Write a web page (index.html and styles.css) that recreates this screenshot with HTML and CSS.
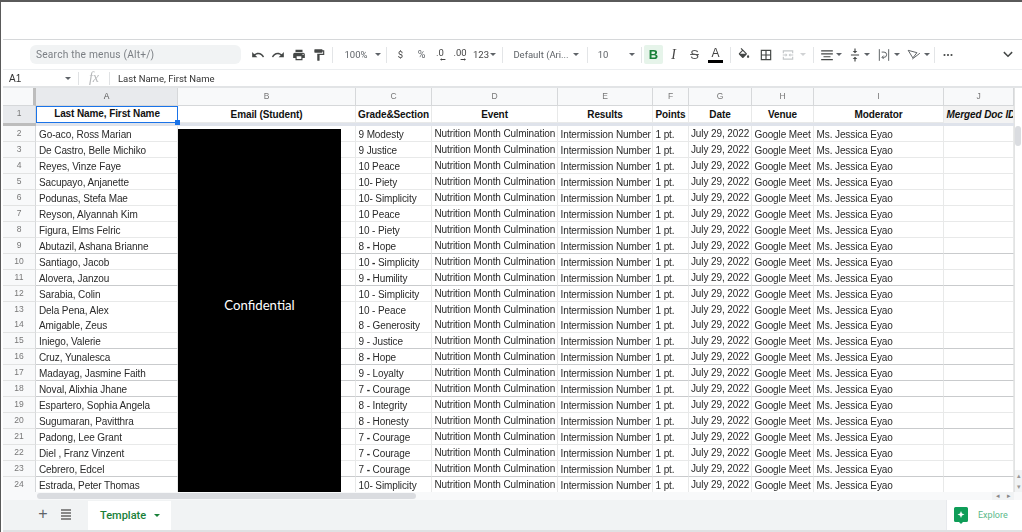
FILE: index.html
```html
<!DOCTYPE html>
<html lang="en">
<head>
<meta charset="utf-8">
<title>Template</title>
<link rel="stylesheet" href="styles.css">
</head>
<body>
<div class="app">
  <div class="blank"></div>
  <div class="toolbar">
    <div class="search">Search the menus (Alt+/)</div>
    <div class="tool w20"><svg class="ic" viewBox="0 0 24 24"><path d="M12.5 8c-2.65 0-5.05.99-6.9 2.6L2 7v9h9l-3.62-3.62c1.39-1.16 3.16-1.88 5.12-1.88 3.54 0 6.55 2.31 7.6 5.5l2.37-.78C21.08 11.03 17.15 8 12.5 8z"/></svg></div>
    <div class="tool w20"><svg class="ic" viewBox="0 0 24 24"><path d="M18.4 10.6C16.55 8.99 14.15 8 11.5 8c-4.65 0-8.58 3.03-9.96 7.22L3.9 16c1.05-3.19 4.05-5.5 7.6-5.5 1.95 0 3.73.72 5.12 1.88L13 16h9V7l-3.6 3.6z"/></svg></div>
    <div class="tool w21"><svg class="ic" viewBox="0 0 24 24"><path d="M19 8H5c-1.66 0-3 1.34-3 3v6h4v4h12v-4h4v-6c0-1.66-1.34-3-3-3zm-3 11H8v-5h8v5zm3-7c-.55 0-1-.45-1-1s.45-1 1-1 1 .45 1 1-.45 1-1 1zm-1-9H6v4h12V3z"/></svg></div>
    <div class="tool w20"><svg class="ic" viewBox="0 0 24 24"><path d="M18 4V3c0-.55-.45-1-1-1H5c-.55 0-1 .45-1 1v4c0 .55.45 1 1 1h12c.55 0 1-.45 1-1V6h1v4H9v11c0 .55.45 1 1 1h2c.55 0 1-.45 1-1v-9h8V4h-3z"/></svg></div>
    <div class="sep s-a"></div>
    <div class="tool w30 txt">100%</div>
    <div class="tool w14"><span class="caret"></span></div>
    <div class="sep s-b"></div>
    <div class="tool w21 txt dark">$</div>
    <div class="tool w21 txt pct">%</div>
    <div class="tool w20 dec dec1"><span>.0</span><svg class="arrow" viewBox="0 0 10 4"><path d="M0 2l3-2v1.300h6v1.400h-6v1.300z"/></svg></div>
    <div class="tool w20 dec dec1"><span>.00</span><svg class="arrow" viewBox="0 0 10 4"><path d="M10 2l-3-2v1.300h-6v1.400h6v1.300z"/></svg></div>
    <div class="tool w18 txt dark">123</div>
    <div class="tool w8 nudge"><span class="caret"></span></div>
    <div class="sep s-c"></div>
    <div class="tool w54 txt">Default (Ari...</div>
    <div class="tool w16"><span class="caret"></span></div>
    <div class="sep s-d"></div>
    <div class="tool w18 txt">10</div>
    <div class="tool w16 far"><span class="caret"></span></div>
    <div class="sep s-e"></div>
    <div class="tool bold">B</div>
    <div class="tool w21 ital">I</div>
    <div class="tool w21 strike">S</div>
    <div class="tool w21 color"><span>A</span><i class="colorbar"></i></div>
    <div class="sep s-f"></div>
    <div class="tool w20"><svg class="ic" viewBox="0 0 24 24"><path d="M16.560 8.940L7.620 0 6.210 1.410l2.380 2.380-5.150 5.150c-.59.59-.59 1.540 0 2.120l5.500 5.500c.29.29.68.44 1.060.44s.77-.15 1.060-.44l5.500-5.500c.59-.58.59-1.530 0-2.120zM5.210 10L10 5.210 14.790 10H5.210zM19 11.500s-2 2.170-2 3.500c0 1.100.9 2 2 2s2-.9 2-2c0-1.330-2-3.500-2-3.500z"/></svg></div>
    <div class="tool w23"><svg class="ic" viewBox="0 0 24 24"><path d="M3 3v18h18V3H3zm8 16H5v-6h6v6zm0-8H5V5h6v6zm8 8h-6v-6h6v6zm0-8h-6V5h6v6z"/></svg></div>
    <div class="tool w21"><svg class="ic faint" viewBox="0 0 24 24"><path d="M3 4h18v5h-2V6H5v3H3zM3 15h2v3h14v-3h2v5H3zM3 11h5V9l3 3-3 3v-2H3zM21 13h-5v2l-3-3 3-3v2h5z"/></svg></div>
    <div class="tool w10"><span class="caret pale"></span></div>
    <div class="sep s-g"></div>
    <div class="tool w16"><svg class="ic" viewBox="0 0 24 24"><path d="M2 4h20v2H2zM2 9h20v2H2zM6 14h12v2H6zM2 19h20v2H2z"/></svg></div>
    <div class="tool w8"><span class="caret"></span></div>
    <div class="tool w16 gapl"><svg class="ic" viewBox="0 0 24 24"><path d="M5 11h14v2H5zM11 1h2v4h3l-4 4-4-4h3zM11 23h2v-4h3l-4-4-4 4h3z"/></svg></div>
    <div class="tool w8"><span class="caret"></span></div>
    <div class="tool w18 gapl"><svg class="ic line" viewBox="0 0 24 24"><path d="M4 2v20M20 2v20M8 7h4a4.500 4.500 0 0 1 0 9H9m2.500-3L8.500 16l3 3"/></svg></div>
    <div class="tool w8"><span class="caret"></span></div>
    <div class="tool w18 gapl"><svg class="ic line" viewBox="0 0 24 24"><path d="M2 4l15 4-7 9zM9 19L22 9"/></svg></div>
    <div class="tool w8"><span class="caret"></span></div>
    <div class="sep s-h"></div>
    <div class="tool w20"><svg class="ic" viewBox="0 0 24 24"><circle cx="6" cy="12" r="1.800"/><circle cx="12" cy="12" r="1.800"/><circle cx="18" cy="12" r="1.800"/></svg></div>
    <div class="spacer"></div>
    <div class="tool w20 end"><svg class="ic" viewBox="0 0 24 24"><path d="M4 8l8 8 8-8-1.800-1.800L12 12.400 5.800 6.200z"/></svg></div>
  </div>
  <div class="formula">
    <div class="nameref">A1</div>
    <span class="caret fcaret"></span>
    <div class="fsep"></div>
    <div class="fx">fx</div>
    <div class="fsep"></div>
    <div class="fval">Last Name, First Name</div>
  </div>
  <div class="sheet">
    <div class="grid">
      <div class="row colrow">
        <div class="corner"></div>
        <div class="colhead sel">A</div><div class="colhead">B</div><div class="colhead">C</div><div class="colhead">D</div><div class="colhead">E</div><div class="colhead">F</div><div class="colhead">G</div><div class="colhead">H</div><div class="colhead">I</div><div class="colhead">J</div>
      </div>
      <div class="row r1">
        <div class="rownum rn1">1</div>
        <div class="cell head a1">Last Name, First Name<i class="handle"></i></div>
        <div class="cell head">Email (Student)</div>
        <div class="cell head">Grade&amp;Section</div>
        <div class="cell head">Event</div>
        <div class="cell head">Results</div>
        <div class="cell head">Points</div>
        <div class="cell head">Date</div>
        <div class="cell head">Venue</div>
        <div class="cell head">Moderator</div>
        <div class="cell head merged">Merged Doc ID</div>
      </div>
      <div class="freeze"></div>

      <div class="row"><div class="rownum">2</div><div class="cell name">Go-aco, Ross Marian</div><div class="cell"></div><div class="cell">9 Modesty</div><div class="cell up">Nutrition Month Culmination</div><div class="cell">Intermission Number</div><div class="cell">1 pt.</div><div class="cell up ctr">July 29, 2022</div><div class="cell">Google Meet</div><div class="cell">Ms. Jessica Eyao</div><div class="cell"></div></div>
      <div class="row"><div class="rownum">3</div><div class="cell name">De Castro, Belle Michiko</div><div class="cell"></div><div class="cell">9 Justice</div><div class="cell up">Nutrition Month Culmination</div><div class="cell">Intermission Number</div><div class="cell">1 pt.</div><div class="cell up ctr">July 29, 2022</div><div class="cell">Google Meet</div><div class="cell">Ms. Jessica Eyao</div><div class="cell"></div></div>
      <div class="row"><div class="rownum">4</div><div class="cell name">Reyes, Vinze Faye</div><div class="cell"></div><div class="cell">10 Peace</div><div class="cell up">Nutrition Month Culmination</div><div class="cell">Intermission Number</div><div class="cell">1 pt.</div><div class="cell up ctr">July 29, 2022</div><div class="cell">Google Meet</div><div class="cell">Ms. Jessica Eyao</div><div class="cell"></div></div>
      <div class="row"><div class="rownum">5</div><div class="cell name">Sacupayo, Anjanette</div><div class="cell"></div><div class="cell">10- Piety</div><div class="cell up">Nutrition Month Culmination</div><div class="cell">Intermission Number</div><div class="cell">1 pt.</div><div class="cell up ctr">July 29, 2022</div><div class="cell">Google Meet</div><div class="cell">Ms. Jessica Eyao</div><div class="cell"></div></div>
      <div class="row"><div class="rownum">6</div><div class="cell name">Podunas, Stefa Mae</div><div class="cell"></div><div class="cell">10- Simplicity</div><div class="cell up">Nutrition Month Culmination</div><div class="cell">Intermission Number</div><div class="cell">1 pt.</div><div class="cell up ctr">July 29, 2022</div><div class="cell">Google Meet</div><div class="cell">Ms. Jessica Eyao</div><div class="cell"></div></div>
      <div class="row"><div class="rownum">7</div><div class="cell name">Reyson, Alyannah Kim</div><div class="cell"></div><div class="cell">10 Peace</div><div class="cell up">Nutrition Month Culmination</div><div class="cell">Intermission Number</div><div class="cell">1 pt.</div><div class="cell up ctr">July 29, 2022</div><div class="cell">Google Meet</div><div class="cell">Ms. Jessica Eyao</div><div class="cell"></div></div>
      <div class="row"><div class="rownum">8</div><div class="cell name">Figura, Elms Felric</div><div class="cell"></div><div class="cell">10 - Piety</div><div class="cell up">Nutrition Month Culmination</div><div class="cell">Intermission Number</div><div class="cell">1 pt.</div><div class="cell up ctr">July 29, 2022</div><div class="cell">Google Meet</div><div class="cell">Ms. Jessica Eyao</div><div class="cell"></div></div>
      <div class="row ruled"><div class="rownum">9</div><div class="cell name">Abutazil, Ashana Brianne</div><div class="cell"></div><div class="cell">8 <b>-</b> Hope</div><div class="cell up">Nutrition Month Culmination</div><div class="cell">Intermission Number</div><div class="cell">1 pt.</div><div class="cell up ctr">July 29, 2022</div><div class="cell">Google Meet</div><div class="cell">Ms. Jessica Eyao</div><div class="cell"></div></div>
      <div class="row"><div class="rownum">10</div><div class="cell name">Santiago, Jacob</div><div class="cell"></div><div class="cell">10 <b>-</b> Simplicity</div><div class="cell up">Nutrition Month Culmination</div><div class="cell">Intermission Number</div><div class="cell">1 pt.</div><div class="cell up ctr">July 29, 2022</div><div class="cell">Google Meet</div><div class="cell">Ms. Jessica Eyao</div><div class="cell"></div></div>
      <div class="row ruled"><div class="rownum">11</div><div class="cell name">Alovera, Janzou</div><div class="cell"></div><div class="cell">9 <b>-</b> Humility</div><div class="cell up">Nutrition Month Culmination</div><div class="cell">Intermission Number</div><div class="cell">1 pt.</div><div class="cell up ctr">July 29, 2022</div><div class="cell">Google Meet</div><div class="cell">Ms. Jessica Eyao</div><div class="cell"></div></div>
      <div class="row"><div class="rownum">12</div><div class="cell name">Sarabia, Colin</div><div class="cell"></div><div class="cell">10 - Simplicity</div><div class="cell up">Nutrition Month Culmination</div><div class="cell">Intermission Number</div><div class="cell">1 pt.</div><div class="cell up ctr">July 29, 2022</div><div class="cell">Google Meet</div><div class="cell">Ms. Jessica Eyao</div><div class="cell"></div></div>
      <div class="row short"><div class="rownum">13</div><div class="cell name">Dela Pena, Alex</div><div class="cell"></div><div class="cell">10 - Peace</div><div class="cell up">Nutrition Month Culmination</div><div class="cell">Intermission Number</div><div class="cell">1 pt.</div><div class="cell up ctr">July 29, 2022</div><div class="cell">Google Meet</div><div class="cell">Ms. Jessica Eyao</div><div class="cell"></div></div>
      <div class="row"><div class="rownum">14</div><div class="cell name">Amigable, Zeus</div><div class="cell"></div><div class="cell">8 - Generosity</div><div class="cell up">Nutrition Month Culmination</div><div class="cell">Intermission Number</div><div class="cell">1 pt.</div><div class="cell up ctr">July 29, 2022</div><div class="cell">Google Meet</div><div class="cell">Ms. Jessica Eyao</div><div class="cell"></div></div>
      <div class="row ruled"><div class="rownum">15</div><div class="cell name">Iniego, Valerie</div><div class="cell"></div><div class="cell">9 - Justice</div><div class="cell up">Nutrition Month Culmination</div><div class="cell">Intermission Number</div><div class="cell">1 pt.</div><div class="cell up ctr">July 29, 2022</div><div class="cell">Google Meet</div><div class="cell">Ms. Jessica Eyao</div><div class="cell"></div></div>
      <div class="row ruled"><div class="rownum">16</div><div class="cell name">Cruz, Yunalesca</div><div class="cell"></div><div class="cell">8 <b>-</b> Hope</div><div class="cell up">Nutrition Month Culmination</div><div class="cell">Intermission Number</div><div class="cell">1 pt.</div><div class="cell up ctr">July 29, 2022</div><div class="cell">Google Meet</div><div class="cell">Ms. Jessica Eyao</div><div class="cell"></div></div>
      <div class="row ruled"><div class="rownum">17</div><div class="cell name">Madayag, Jasmine Faith</div><div class="cell"></div><div class="cell">9 - Loyalty</div><div class="cell up">Nutrition Month Culmination</div><div class="cell">Intermission Number</div><div class="cell">1 pt.</div><div class="cell up ctr">July 29, 2022</div><div class="cell">Google Meet</div><div class="cell">Ms. Jessica Eyao</div><div class="cell"></div></div>
      <div class="row ruled"><div class="rownum">18</div><div class="cell name">Noval, Alixhia Jhane</div><div class="cell"></div><div class="cell">7 <b>-</b> Courage</div><div class="cell up">Nutrition Month Culmination</div><div class="cell">Intermission Number</div><div class="cell">1 pt.</div><div class="cell up ctr">July 29, 2022</div><div class="cell">Google Meet</div><div class="cell">Ms. Jessica Eyao</div><div class="cell"></div></div>
      <div class="row"><div class="rownum">19</div><div class="cell name">Espartero, Sophia Angela</div><div class="cell"></div><div class="cell">8 - Integrity</div><div class="cell up">Nutrition Month Culmination</div><div class="cell">Intermission Number</div><div class="cell">1 pt.</div><div class="cell up ctr">July 29, 2022</div><div class="cell">Google Meet</div><div class="cell">Ms. Jessica Eyao</div><div class="cell"></div></div>
      <div class="row ruled"><div class="rownum">20</div><div class="cell name">Sugumaran, Pavitthra</div><div class="cell"></div><div class="cell">8 - Honesty</div><div class="cell up">Nutrition Month Culmination</div><div class="cell">Intermission Number</div><div class="cell">1 pt.</div><div class="cell up ctr">July 29, 2022</div><div class="cell">Google Meet</div><div class="cell">Ms. Jessica Eyao</div><div class="cell"></div></div>
      <div class="row"><div class="rownum">21</div><div class="cell name">Padong, Lee Grant</div><div class="cell"></div><div class="cell">7 <b>-</b> Courage</div><div class="cell up">Nutrition Month Culmination</div><div class="cell">Intermission Number</div><div class="cell">1 pt.</div><div class="cell up ctr">July 29, 2022</div><div class="cell">Google Meet</div><div class="cell">Ms. Jessica Eyao</div><div class="cell"></div></div>
      <div class="row"><div class="rownum">22</div><div class="cell name">Diel , Franz Vinzent</div><div class="cell"></div><div class="cell">7 <b>-</b> Courage</div><div class="cell up">Nutrition Month Culmination</div><div class="cell">Intermission Number</div><div class="cell">1 pt.</div><div class="cell up ctr">July 29, 2022</div><div class="cell">Google Meet</div><div class="cell">Ms. Jessica Eyao</div><div class="cell"></div></div>
      <div class="row ruled"><div class="rownum">23</div><div class="cell name">Cebrero, Edcel</div><div class="cell"></div><div class="cell">7 <b>-</b> Courage</div><div class="cell up">Nutrition Month Culmination</div><div class="cell">Intermission Number</div><div class="cell">1 pt.</div><div class="cell up ctr">July 29, 2022</div><div class="cell">Google Meet</div><div class="cell">Ms. Jessica Eyao</div><div class="cell"></div></div>
      <div class="row short"><div class="rownum">24</div><div class="cell name">Estrada, Peter Thomas</div><div class="cell"></div><div class="cell">10- Simplicity</div><div class="cell up">Nutrition Month Culmination</div><div class="cell">Intermission Number</div><div class="cell">1 pt.</div><div class="cell up ctr">July 29, 2022</div><div class="cell">Google Meet</div><div class="cell">Ms. Jessica Eyao</div><div class="cell"></div></div>
      <div class="redact">Confidential</div>
    </div>
    <div class="vscroll">
      <div class="vthumb"></div>
      <div class="spacer"></div>
      <div class="sbtn">&#9652;</div>
      <div class="sbtn">&#9662;</div>
    </div>
  </div>
  <div class="hscroll">
    <div class="hthumb"></div>
    <div class="spacer"></div>
    <div class="hbtn">&#9666;</div>
    <div class="hbtn">&#9656;</div>
    <div class="hend"></div>
  </div>
  <div class="tabbar">
    <div class="plus">+</div>
    <div class="list"><i></i><i></i><i></i><i></i></div>
    <div class="tab">Template<span class="caret green"></span></div>
    <div class="spacer"></div>
    <div class="explore">
      <svg class="exicon" viewBox="0 0 14 17"><path fill="#0f9d58" d="M1.500 0h11A1.500 1.500 0 0 1 14 1.500v12a1.500 1.500 0 0 1-1.500 1.500H9l-2 2-2-2H1.500A1.500 1.500 0 0 1 0 13.500v-12A1.500 1.500 0 0 1 1.500 0z"/><path fill="#fff" d="M7 4l1 2.500L10.500 7.500 8 8.500 7 11 6 8.500 3.500 7.500 6 6.500z"/></svg>
      <span>Explore</span>
    </div>
  </div>
</div>
</body>
</html>
```
FILE: styles.css
```css
* { box-sizing: border-box; }
html, body { margin: 0; padding: 0; background: #fff; }
body { font-family: "Liberation Sans", Arial, sans-serif; color: #222; overflow: hidden; }

.app {
  width: 1022px;
  height: 532px;
  display: flex;
  flex-direction: column;
  border-top: 2px solid #5a5a5a;
  border-left: 1px solid #5a5a5a;
  padding-left: 2px;
  overflow: hidden;
  filter: blur(.3px);
}
.spacer { flex: 1; }

.blank { height: 38px; flex: none; border-bottom: 1px solid #d6d8da; }

/* toolbar */
.toolbar {
  height: 30px;
  flex: none;
  display: flex;
  align-items: center;
  padding-left: 27px;
  border-bottom: 1px solid #eceef0;
  color: #5f6368;
  font-size: 9.500px;
}
.search {
  width: 211px;
  height: 19px;
  margin-right: 7px;
  border-radius: 6px;
  background: #f1f3f4;
  color: #7b7f84;
  font-size: 10.200px;
  line-height: 20px;
  padding-left: 6px;
  font-family: Roboto, "Liberation Sans", sans-serif;
  letter-spacing: .2px;
}
.tool { flex: none; height: 19px; display: flex; align-items: center; justify-content: center; position: relative; }
.w8 { width: 8px; } .w10 { width: 10px; } .w14 { width: 14px; } .w16 { width: 16px; } .w18 { width: 18px; }
.w20 { width: 20px; } .w21 { width: 21px; } .w23 { width: 23px; } .w30 { width: 30px; } .w54 { width: 54px; }
.gapl { margin-left: 4px; }
.far { justify-content: flex-end; margin-left: 9px; padding-right: 2px; }
.nudge { justify-content: flex-start; }
.end { margin-right: 4px; }
.ic { width: 14px; height: 14px; fill: #444746; }
.ic.faint { fill: #c4c7c9; }
.ic.line { fill: none; stroke: #55595c; stroke-width: 1.600; }
.txt { font-family: Roboto, "Liberation Sans", sans-serif; white-space: nowrap; }
.dark { color: #444; font-size: 9.500px; }
.pct { font-size: 10.500px; }
.caret { display: block; width: 0; height: 0; border-left: 3px solid transparent; border-right: 3px solid transparent; border-top: 3px solid #5f6368; }
.caret.pale { border-top-color: #d0d2d4; }
.sep { flex: none; width: 1px; height: 16px; background: #e3e5e7; }
.s-a { margin: 0 8px 0 3px; }
.s-b { margin: 0 3px 0 1px; }
.s-c { margin: 0 11px 0 4px; }
.s-d { margin: 0 6px 0 3px; }
.s-e { margin: 0 2px 0 4px; }
.s-f { margin: 0 3px 0 4px; }
.s-g { margin: 0 5px 0 5px; }
.s-h { margin: 0 3px 0 3px; }
.dec { flex-direction: column; font-size: 9.500px; color: #444; line-height: 10px; font-family: Roboto, "Liberation Sans", sans-serif; }
.dec1 { left: -2px; }
.arrow { width: 6px; height: 3px; fill: #444; margin-left: 6px; }
.bold { width: 19px; background: #e6f4ea; border-radius: 2px; color: #188038; font-weight: 700; font-size: 13px; }
.ital { font-family: "Liberation Serif", serif; font-style: italic; font-size: 14px; color: #444; }
.strike { font-size: 13px; color: #555; text-decoration: line-through; }
.color { flex-direction: column; color: #444; font-size: 12px; line-height: 13px; }
.colorbar { display: block; width: 15px; height: 3px; background: #000; }

/* formula bar */
.formula {
  height: 18px;
  flex: none;
  display: flex;
  align-items: center;
  font-size: 10px;
  color: #333;
  border-bottom: 2px solid #e2e4e6;
}
.nameref { width: 62px; padding-left: 6px; }
.fcaret { margin-right: 7px; }
.fsep { width: 1px; height: 13px; background: #e0e2e4; }
.fx { width: 30px; text-align: center; font-family: "Liberation Serif", serif; font-style: italic; font-size: 14px; color: #b5b7b9; }
.fval { padding-left: 8px; font-size: 9.500px; font-family: Roboto, "Liberation Sans", sans-serif; }

/* sheet */
.sheet { flex: none; height: 404px; display: flex; overflow: hidden; }
.grid {
  position: relative;
  flex: none;
  width: 1011px;
  font-size: 10px;
  letter-spacing: -.1px;
}
.row {
  display: grid;
  grid-template-columns: 33px 142px 178px 76px 126px 95px 36px 63px 62px 130px 70px;
  height: 16px;
}
.row.colrow { height: 18px; }
.row.r1 { height: 16px; }
.row.short { height: 15px; }
.row.ruled .cell { border-bottom-color: #c9cbcd; }
.corner { background: #f8f9fa; border-right: 3px solid #bdbdbd; border-bottom: 1px solid #d6d8da; }
.colhead {
  background: #f8f9fa;
  border-right: 1px solid #d6d8da;
  border-bottom: 1px solid #d6d8da;
  color: #777;
  font-size: 8.500px;
  letter-spacing: 0;
  text-align: center;
  line-height: 17px;
}
.colhead.sel { background: #e8eaed; color: #555; }
.rownum {
  background: #f8f9fa;
  border-right: 1px solid #d6d8da;
  border-bottom: 1px solid #e2e3e3;
  color: #777;
  font-size: 8.500px;
  letter-spacing: 0;
  text-align: center;
  line-height: 15px;
}
.rn1 { background: #e8eaed; border-bottom: 0; }
.cell {
  position: relative;
  background: #fff;
  border-right: 1px solid #e8e9e9;
  border-bottom: 1px solid #e8e9e9;
  padding: 1px 0 0 2.500px;
  line-height: 15px;
  white-space: nowrap;
  overflow: hidden;
  color: #2a2a2a;
}
.cell.name { padding-left: 3px; }
.cell.up { padding-top: 0; }
.cell.ctr { text-align: center; padding-left: 0; }
.cell.head { text-align: center; font-weight: 700; color: #111; padding: 1px 0 0; overflow: visible; }
.cell.a1 { border: 1.500px solid #1a73e8; padding-top: 0; line-height: 13px; overflow: visible; z-index: 1; }
.cell.merged { background: #f3f3f3; font-style: italic; overflow: hidden; text-align: left; padding-left: 2.500px; border-bottom: 0; }
.handle { position: absolute; right: -3px; bottom: -3px; width: 5px; height: 5px; background: #1a73e8; }
.freeze { height: 4px; background: #dfe3eb; border-left: 33px solid #bdbdbd; }
.redact {
  position: absolute;
  left: 175px;
  top: 41px;
  width: 163px;
  height: 363px;
  padding-bottom: 11px;
  background: #000;
  color: #fff;
  font-family: Lato, "Open Sans", sans-serif;
  font-size: 13.200px;
  letter-spacing: 0;
  display: flex;
  align-items: center;
  justify-content: center;
}

.vscroll { flex: 1; display: flex; flex-direction: column; background: #fff; border-left: 1px solid #e2e3e3; padding-top: 38px; }
.vthumb { width: 6px; height: 20px; background: #dadce0; border-radius: 3px; }
.sbtn { height: 11px; background: #f1f3f4; color: #999; font-size: 7px; line-height: 11px; text-align: center; }

.hscroll { flex: none; height: 8px; display: flex; align-items: center; background: #f8f9fa; }
.hthumb { width: 379px; height: 6px; margin-left: 34px; border-radius: 3px; background: #dadce0; }
.hbtn { width: 11px; height: 8px; background: #f1f3f4; color: #888; font-size: 7px; line-height: 8px; text-align: center; }
.hend { width: 8px; }

/* tab bar */
.tabbar {
  flex: none;
  height: 32px;
  display: flex;
  align-items: stretch;
  background: #f1f3f4;
  border-bottom: 2px solid #dfe1e3;
}
.plus { width: 24px; margin-left: 28px; text-align: center; font-size: 16px; line-height: 28px; color: #5f6368; }
.list { width: 10px; margin: 0 17px 0 6px; display: flex; flex-direction: column; justify-content: center; gap: 1px; padding-bottom: 2px; }
.list i { display: block; height: 2px; background: #888; }
.tab {
  width: 83px;
  margin-top: 1px;
  background: #fff;
  color: #188038;
  font-family: Roboto, "Liberation Sans", sans-serif;
  font-size: 11px;
  font-weight: 500;
  display: flex;
  align-items: center;
  padding-left: 12px;
}
.caret.green { border-top-color: #188038; margin-left: 8px; }
.explore { width: 76px; background: #fff; border-left: 1px solid #e8eaed; display: flex; align-items: center; padding-left: 7px; gap: 10px; color: #5cb98a; font-size: 9px; font-family: Roboto, "Liberation Sans", sans-serif; }
.exicon { width: 14px; height: 17px; }
```
